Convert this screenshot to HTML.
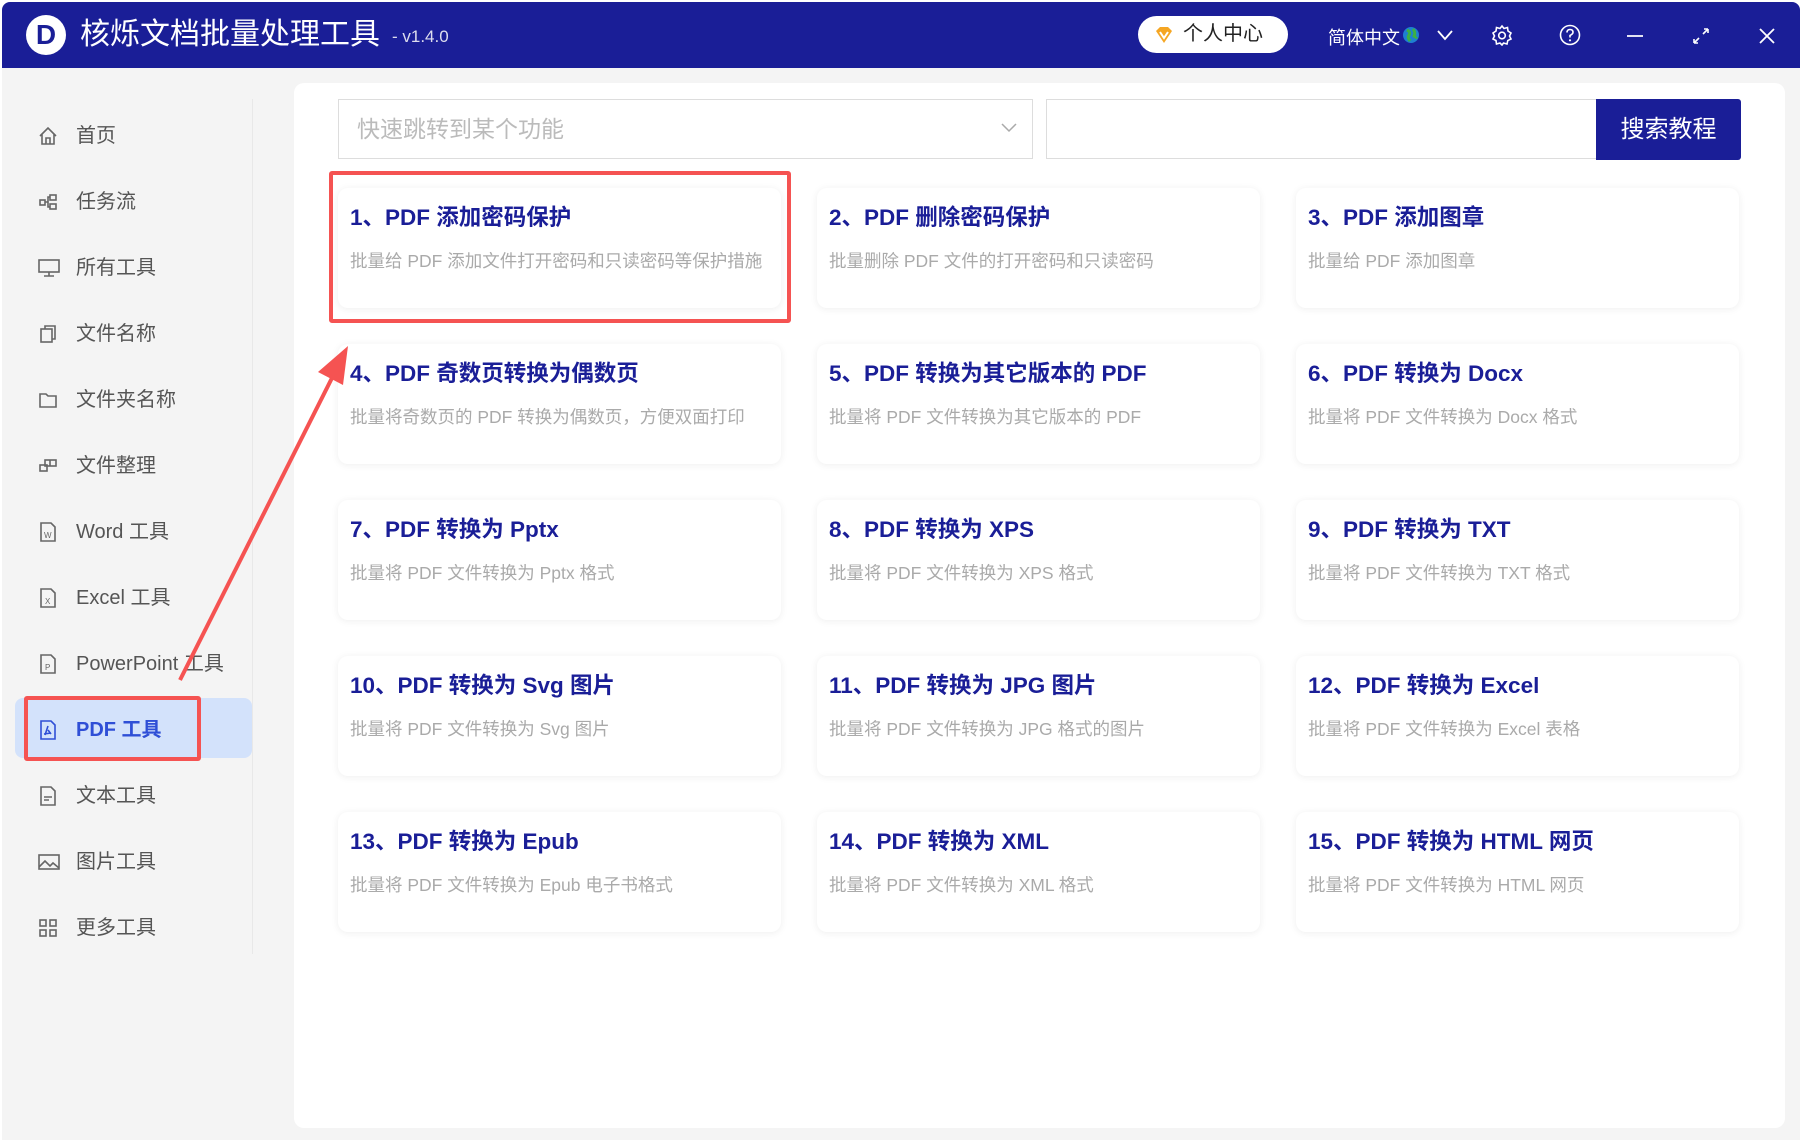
<!DOCTYPE html>
<html><head><meta charset="utf-8"><style>
*{margin:0;padding:0;box-sizing:border-box}
body{width:1800px;height:1140px;overflow:hidden;background:#fff;font-family:"Liberation Sans","Noto Sans CJK SC",sans-serif;position:relative}
.win{position:absolute;left:2px;top:2px;width:1798px;height:1138px;background:#f4f4f4;border-radius:8px 8px 0 0;overflow:hidden}
.hdr{position:absolute;left:0;top:0;width:100%;height:66px;background:#1a1e97}
.logo{position:absolute;left:24px;top:13px;width:40px;height:40px;border-radius:50%;background:#fff}
.logo:after{content:"D";position:absolute;left:0;top:0;width:40px;height:40px;text-align:center;line-height:40px;font-weight:bold;font-size:28px;color:#1a1e97}
.title{position:absolute;left:78px;top:14px;color:#fff;font-size:30px;line-height:38px}
.ver{position:absolute;left:390px;top:25px;color:#dde;font-size:17px}
.pill{position:absolute;left:1136px;top:14px;width:150px;height:37px;border-radius:19px;background:#fff;font-size:20px;line-height:37px;color:#222;padding-left:45px}
.lang{position:absolute;left:1326px;top:22px;color:#fff;font-size:18px}
.div{position:absolute;left:250px;top:97px;width:1px;height:855px;background:#e8e8e8}
.it{position:absolute;left:36px;height:30px;font-size:20px;color:#555;line-height:30px;padding-left:38px}
.it svg{position:absolute;left:0;top:5px}
.act{position:absolute;left:13px;top:696px;width:237px;height:60px;background:#d3e2fb;border-radius:8px}
.rb{position:absolute;border:4px solid #f55352;border-radius:3px}
.main{position:absolute;left:292px;top:81px;width:1491px;height:1045px;background:#fff;border-radius:10px}
.sel{position:absolute;left:336px;top:97px;width:695px;height:60px;border:1px solid #ddd;font-size:23px;color:#bbb;line-height:58px;padding-left:18px}
.inp{position:absolute;left:1044px;top:97px;width:552px;height:60px;border:1px solid #ddd;border-right:none}
.btn{position:absolute;left:1594px;top:97px;width:145px;height:61px;background:#1a1e97;color:#fff;font-size:24px;text-align:center;line-height:61px;border-radius:0 3px 3px 0}
.card{position:absolute;width:443px;height:120px;background:#fff;border-radius:10px;box-shadow:0 1px 8px rgba(0,0,0,.07)}
.card b{position:absolute;left:12px;top:12px;font-size:22.5px;color:#1a1e97;white-space:nowrap}
.card span{position:absolute;left:12px;top:60px;font-size:17.5px;color:#aaa;white-space:nowrap}
</style></head><body>
<div class="win">
<div class="hdr">
<div class="logo"></div>
<div class="title">核烁文档批量处理工具</div>
<div class="ver">- v1.4.0</div>
<div class="pill"><svg style="position:absolute;left:16px;top:9px" width="20" height="20" viewBox="0 0 20 20"><path d="M2 6 L6 2 H14 L18 6 L10 18 Z" fill="#f5a623"/><path d="M6 7 L10 13 L14 7" stroke="#fff" stroke-width="2" fill="none"/></svg>个人中心</div>
<div class="lang">简体中文</div>
<svg style="position:absolute;left:1400px;top:24px" width="18" height="18"><circle cx="9" cy="9" r="8" fill="#1e7fd0"/><path d="M5 4 Q9 6 7 9 Q5 11 8 15 M11 3 Q14 7 12 10 Q14 12 15 11" stroke="#3cb043" stroke-width="3" fill="none"/></svg>
<svg style="position:absolute;left:1434px;top:27px" width="18" height="12"><path d="M2 2 L9 10 L16 2" stroke="#fff" stroke-width="1.8" fill="none"/></svg>
<svg style="position:absolute;left:1489px;top:22px" width="22" height="22" viewBox="0 0 22 22"><path d="M11 2 L13 4.5 L16.5 3.5 L17 7 L20 9 L18.5 12 L20 15 L16.8 16.5 L16 20 L12.5 19 L11 21 L9 19 L5.5 20 L5 16.5 L2 15 L3.5 12 L2 9 L5 7 L5.5 3.5 L9 4.5 Z" stroke="#fff" stroke-width="1.6" fill="none"/><circle cx="11" cy="11.5" r="3.3" stroke="#fff" stroke-width="1.6" fill="none"/></svg>
<svg style="position:absolute;left:1557px;top:22px" width="22" height="22"><circle cx="11" cy="11" r="9.5" stroke="#fff" stroke-width="1.6" fill="none"/><path d="M8 8.5 Q8 5.5 11 5.5 Q14 5.5 14 8.3 Q14 10 11 11.5 V13.5" stroke="#fff" stroke-width="1.6" fill="none"/><circle cx="11" cy="16.3" r="1.1" fill="#fff"/></svg>
<svg style="position:absolute;left:1623px;top:24px" width="20" height="20"><path d="M2 10 H18" stroke="#fff" stroke-width="1.8"/></svg>
<svg style="position:absolute;left:1689px;top:24px" width="20" height="20"><path d="M3 17 L8 12 M3 17 V13 M3 17 H7 M17 3 L12 8 M17 3 V7 M17 3 H13" stroke="#fff" stroke-width="1.6" fill="none"/></svg>
<svg style="position:absolute;left:1755px;top:24px" width="20" height="20"><path d="M3 3 L17 17 M17 3 L3 17" stroke="#fff" stroke-width="1.8"/></svg>
</div>
<div class="div"></div>
<div class="act"></div>
<div class="it" style="top:119px"><svg width="20" height="20" viewBox="0 0 20 20" fill="none" stroke="#666" stroke-width="1.6"><path d="M2 10 L10 2 L18 10 M4 8 V18 H16 V8 M8 18 V12 H12 V18"/></svg>首页</div>
<div class="it" style="top:185px"><svg width="20" height="20" viewBox="0 0 20 20" fill="none" stroke="#666" stroke-width="1.6"><rect x="2" y="8" width="5" height="5"/><rect x="12" y="3" width="6" height="5"/><rect x="12" y="12" width="6" height="5"/><path d="M7 10 H10 V5 H12 M10 10 V15 H12"/></svg>任务流</div>
<div class="it" style="top:251px"><svg width="22" height="20" viewBox="0 0 22 20" fill="none" stroke="#666" stroke-width="1.6"><rect x="1" y="2" width="20" height="12"/><path d="M11 14 V18 M6 18 H16"/></svg>所有工具</div>
<div class="it" style="top:317px"><svg width="20" height="20" viewBox="0 0 20 20" fill="none" stroke="#666" stroke-width="1.6"><rect x="3" y="5" width="11" height="13"/><path d="M7 5 V2 H17 V15 H14"/></svg>文件名称</div>
<div class="it" style="top:383px"><svg width="20" height="20" viewBox="0 0 20 20" fill="none" stroke="#666" stroke-width="1.6"><path d="M2 4 H8 L10 6 H18 V17 H2 Z"/></svg>文件夹名称</div>
<div class="it" style="top:449px"><svg width="20" height="20" viewBox="0 0 20 20" fill="none" stroke="#666" stroke-width="1.6"><rect x="2" y="9" width="7" height="6"/><rect x="7" y="4" width="11" height="6"/><path d="M12 4 V10"/></svg>文件整理</div>
<div class="it" style="top:515px"><svg width="20" height="20" viewBox="0 0 20 20" fill="none" stroke="#666" stroke-width="1.6"><path d="M3 1 H13 L17 5 V19 H3 Z"/><text x="6" y="16" font-size="8" fill="#666" stroke="none">W</text></svg>Word 工具</div>
<div class="it" style="top:581px"><svg width="20" height="20" viewBox="0 0 20 20" fill="none" stroke="#666" stroke-width="1.6"><path d="M3 1 H13 L17 5 V19 H3 Z"/><text x="7" y="16" font-size="8" fill="#666" stroke="none">X</text></svg>Excel 工具</div>
<div class="it" style="top:647px"><svg width="20" height="20" viewBox="0 0 20 20" fill="none" stroke="#666" stroke-width="1.6"><path d="M3 1 H13 L17 5 V19 H3 Z"/><text x="7" y="16" font-size="8" fill="#666" stroke="none">P</text></svg>PowerPoint 工具</div>
<div class="it" style="top:713px;color:#2f4fd6;font-weight:bold"><svg width="20" height="20" viewBox="0 0 20 20" fill="none" stroke="#2f4fd6" stroke-width="1.6"><path d="M3 1 H13 L17 5 V19 H3 Z"/><path d="M10 6 L7 15 M10 10 L13 14 M6 14 L13 13"/></svg>PDF 工具</div>
<div class="it" style="top:779px"><svg width="20" height="20" viewBox="0 0 20 20" fill="none" stroke="#666" stroke-width="1.6"><path d="M3 1 H13 L17 5 V19 H3 Z M6 11 H14 M6 14 H11"/></svg>文本工具</div>
<div class="it" style="top:845px"><svg width="22" height="20" viewBox="0 0 22 20" fill="none" stroke="#666" stroke-width="1.6"><rect x="1" y="3" width="20" height="14"/><path d="M1 15 L7 9 L12 14 L15 11 L21 16"/></svg>图片工具</div>
<div class="it" style="top:911px"><svg width="20" height="20" viewBox="0 0 20 20" fill="none" stroke="#666" stroke-width="1.6"><rect x="2" y="2" width="6" height="6"/><rect x="12" y="2" width="6" height="6"/><rect x="2" y="12" width="6" height="6"/><rect x="12" y="12" width="6" height="6"/></svg>更多工具</div>
<div class="main"></div>
<div class="sel">快速跳转到某个功能<svg style="position:absolute;right:14px;top:22px" width="18" height="12"><path d="M2 2 L9 9 L16 2" stroke="#aaa" stroke-width="1.5" fill="none"/></svg></div>
<div class="inp"></div>
<div class="btn">搜索教程</div>

<div class="card" style="left:336px;top:186px"><b>1、PDF 添加密码保护</b><span>批量给 PDF 添加文件打开密码和只读密码等保护措施</span></div>
<div class="card" style="left:815px;top:186px"><b>2、PDF 删除密码保护</b><span>批量删除 PDF 文件的打开密码和只读密码</span></div>
<div class="card" style="left:1294px;top:186px"><b>3、PDF 添加图章</b><span>批量给 PDF 添加图章</span></div>
<div class="card" style="left:336px;top:342px"><b>4、PDF 奇数页转换为偶数页</b><span>批量将奇数页的 PDF 转换为偶数页，方便双面打印</span></div>
<div class="card" style="left:815px;top:342px"><b>5、PDF 转换为其它版本的 PDF</b><span>批量将 PDF 文件转换为其它版本的 PDF</span></div>
<div class="card" style="left:1294px;top:342px"><b>6、PDF 转换为 Docx</b><span>批量将 PDF 文件转换为 Docx 格式</span></div>
<div class="card" style="left:336px;top:498px"><b>7、PDF 转换为 Pptx</b><span>批量将 PDF 文件转换为 Pptx 格式</span></div>
<div class="card" style="left:815px;top:498px"><b>8、PDF 转换为 XPS</b><span>批量将 PDF 文件转换为 XPS 格式</span></div>
<div class="card" style="left:1294px;top:498px"><b>9、PDF 转换为 TXT</b><span>批量将 PDF 文件转换为 TXT 格式</span></div>
<div class="card" style="left:336px;top:654px"><b>10、PDF 转换为 Svg 图片</b><span>批量将 PDF 文件转换为 Svg 图片</span></div>
<div class="card" style="left:815px;top:654px"><b>11、PDF 转换为 JPG 图片</b><span>批量将 PDF 文件转换为 JPG 格式的图片</span></div>
<div class="card" style="left:1294px;top:654px"><b>12、PDF 转换为 Excel</b><span>批量将 PDF 文件转换为 Excel 表格</span></div>
<div class="card" style="left:336px;top:810px"><b>13、PDF 转换为 Epub</b><span>批量将 PDF 文件转换为 Epub 电子书格式</span></div>
<div class="card" style="left:815px;top:810px"><b>14、PDF 转换为 XML</b><span>批量将 PDF 文件转换为 XML 格式</span></div>
<div class="card" style="left:1294px;top:810px"><b>15、PDF 转换为 HTML 网页</b><span>批量将 PDF 文件转换为 HTML 网页</span></div>
</div>
<div class="rb" style="left:329px;top:171px;width:462px;height:152px"></div>
<div class="rb" style="left:24px;top:696px;width:177px;height:65px"></div>
<svg style="position:absolute;left:0;top:0" width="1800" height="1140"><path d="M180 680 L336 370" stroke="#f55352" stroke-width="4"/><path d="M348 346 L318 372 L343 385 Z" fill="#f55352"/></svg>
</body></html>
